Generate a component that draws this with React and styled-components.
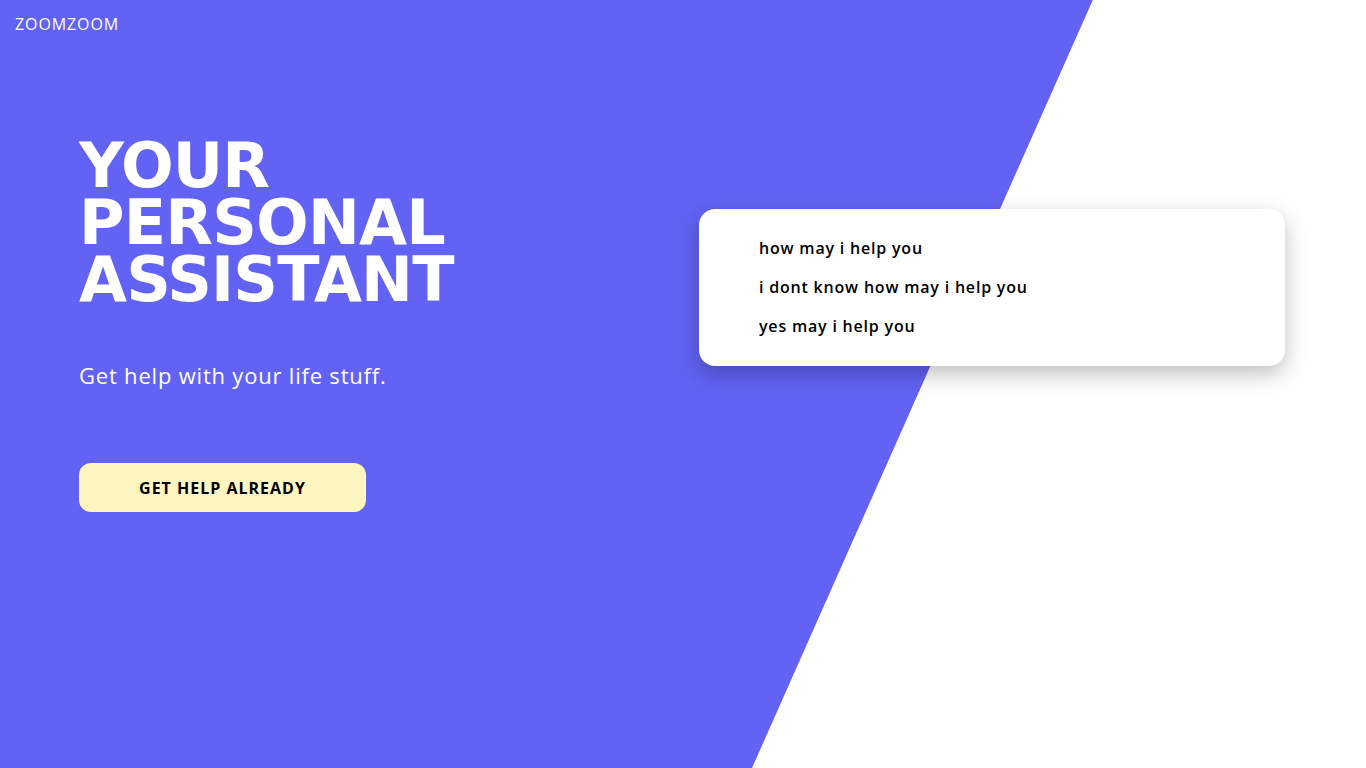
import React from 'react'
import styled, { createGlobalStyle } from 'styled-components'

const GlobalStyle = createGlobalStyle`
  * {
    box-sizing: border-box;
  }
  body {
    margin: 0;
    font-family: "Open Sans", "Liberation Sans", sans-serif;
    background: #ffffff;
  }
`

const suggestions = [
  'how may i help you',
  'i dont know how may i help you',
  'yes may i help you',
]

export default function App() {
  return (
    <Page>
      <GlobalStyle />
      <Header>
        <Logo>ZOOMZOOM</Logo>
      </Header>

      <Main>
        <Hero>
          <Title>
            YOUR
            <br />
            PERSONAL
            <br />
            ASSISTANT
          </Title>
          <Subtitle>Get help with your life stuff.</Subtitle>
          <CallButton>GET HELP ALREADY</CallButton>
        </Hero>

        <ChatSide>
          <Card>
            {suggestions.map((text) => (
              <Suggestion key={text}>{text}</Suggestion>
            ))}
          </Card>
        </ChatSide>
      </Main>
    </Page>
  )
}

const Page = styled.div`
  position: relative;
  min-height: 100vh;
  overflow: hidden;
  color: #ffffff;

  &::before {
    content: '';
    position: absolute;
    inset: 0;
    background: #6262f4;
    clip-path: polygon(0 0, 80% 0, 55.05% 100%, 0 100%);
    z-index: 0;
  }
`

const Header = styled.header`
  position: relative;
  z-index: 1;
  height: 48px;
  padding: 14px 15px;
`

const Logo = styled.div`
  font-size: 16px;
  line-height: 20px;
  letter-spacing: 0.9px;
`

const Main = styled.main`
  position: relative;
  z-index: 1;
  display: grid;
  grid-template-columns: 1fr 1fr;
`

const Hero = styled.section`
  padding: 89px 0 0 79px;
  display: flex;
  flex-direction: column;
  align-items: flex-start;
`

const Title = styled.h1`
  margin: 0;
  font-family: "DejaVu Sans", "Open Sans", sans-serif;
  font-weight: 700;
  font-size: 62px;
  line-height: 57px;
  letter-spacing: -0.8px;
`

const Subtitle = styled.p`
  margin: 52px 0 0;
  font-size: 22px;
  line-height: 30px;
  letter-spacing: 0.8px;
`

const CallButton = styled.button`
  margin-top: 73px;
  width: 287px;
  height: 49px;
  border: none;
  border-radius: 12px;
  background: #fff5c0;
  color: #000000;
  font-family: "Open Sans", sans-serif;
  font-weight: 700;
  font-size: 16px;
  letter-spacing: 1px;
  cursor: pointer;
`

const ChatSide = styled.section`
  padding: 161px 81px 0 16px;
`

const Card = styled.div`
  display: flex;
  flex-direction: column;
  gap: 15px;
  padding: 27px 60px 28px;
  background: #ffffff;
  border-radius: 16px;
  box-shadow: 0 8px 22px rgba(0, 0, 0, 0.25);
`

const Suggestion = styled.div`
  color: #000000;
  font-size: 16px;
  line-height: 24px;
  font-weight: 600;
  letter-spacing: 0.8px;
`
